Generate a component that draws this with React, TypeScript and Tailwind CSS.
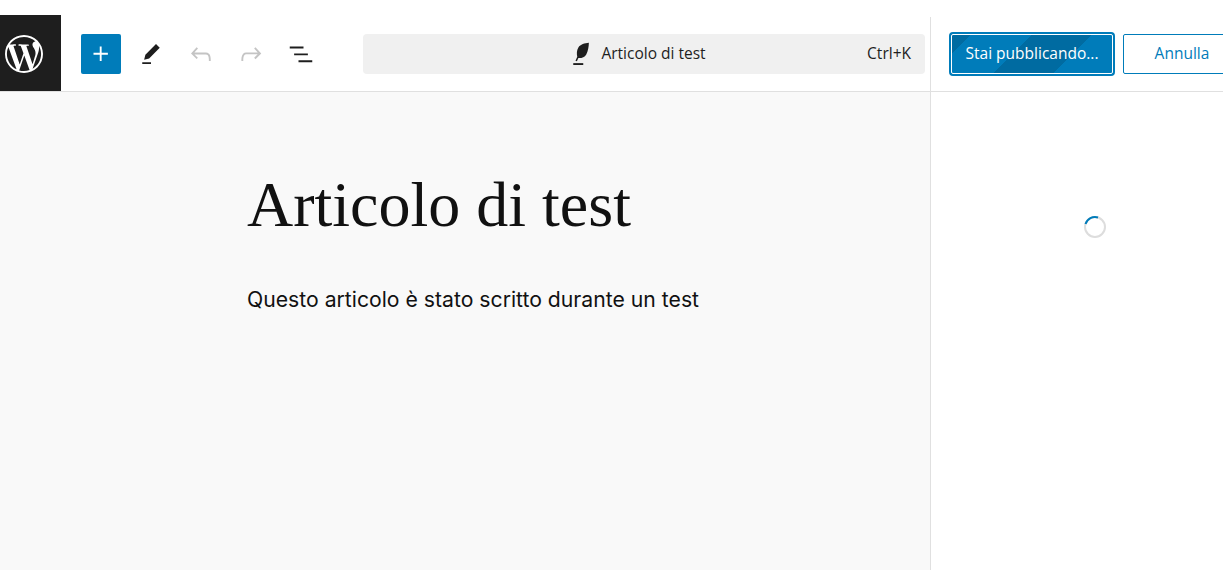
import React from 'react';
import { SiWordpress } from 'react-icons/si';

const uiFont = "font-['Open_Sans',sans-serif]";

const ToolIcon = ({ d, className }: { d: string; className: string }) => (
  <button className="flex h-10 w-10 shrink-0 items-center justify-center">
    <svg viewBox="0 0 24 24" width="30" height="30" className={className} fill="currentColor">
      <path d={d} />
    </svg>
  </button>
);

const App = () => {
  return (
    <div className="flex h-[570px] w-[1223px] flex-col overflow-hidden bg-white">
      <div className="h-[15px] shrink-0 bg-white shadow-[0_2px_4px_rgba(0,0,0,0.22)]" />

      <header className="flex h-[77px] shrink-0 items-center border-b border-[#e0e0e0] bg-white pt-[2px]">
        <div className="-mt-[2px] flex h-[calc(100%+2px)] w-[61px] shrink-0 items-center justify-start bg-[#1e1e1e] pt-[2px] pl-[5px]">
          <SiWordpress className="h-[38px] w-[38px] text-white" />
        </div>

        <div className="ml-5 flex items-center gap-[10px]">
          <button className="flex h-10 w-10 items-center justify-center rounded-[2px] bg-[#007cba]">
            <svg viewBox="0 0 24 24" width="30" height="30" fill="white">
              <path d="M11 12.500V17.500H12.500V12.500H17.500V11H12.500V6H11V11H6V12.500H11Z" />
            </svg>
          </button>
          <ToolIcon className="text-[#1e1e1e]" d="m19 7-3-3-8.500 8.500-1 4 4-1L19 7Zm-7 11.500H5V20h7v-1.500Z" />
          <ToolIcon className="text-[#c4c4c4]" d="M18.300 11.700c-.6-.6-1.400-.9-2.300-.9H6.700l2.900-3.300-1.100-1-4.500 5L8.500 16l1-1-2.700-2.700H16c.5 0 .9.200 1.300.5 1 1 1 3.400 1 4.500v.3h1.500v-.2c0-1.500 0-4.300-1.500-5.700z" />
          <ToolIcon className="text-[#c4c4c4]" d="M15.600 6.500l-1.100 1 2.900 3.300H8c-.9 0-1.700.3-2.300.9-1.400 1.500-1.400 4.200-1.400 5.600v.2h1.500v-.3c0-1.100 0-3.500 1-4.500.3-.3.7-.5 1.300-.5h9.200L14.500 15l1.100 1.100 4.600-4.600-4.600-5z" />
          <ToolIcon className="text-[#1e1e1e]" d="M3 6h11v1.500H3V6zm3.500 5.500h11V13h-11v-1.500zM21 17H10v1.500h11V17z" />
        </div>

        <div className={`relative ml-[42px] flex h-10 w-[562px] shrink-0 items-center justify-center rounded-[4px] bg-[#f0f0f0] pr-[15px] text-[15.5px] text-[#1e1e1e] ${uiFont}`}>
          <svg viewBox="0 0 24 24" width="30" height="30" fill="#1e1e1e" className="mr-[4px]">
            <path d="M17.500 3c-3.300.3-6.800 1.200-8.400 3.700-1.400 2.200-1.400 5-.9 7.500L6.800 17.300l1.100.5 1.200-2.600c2.500.2 5-.6 6.300-2.900 1.500-2.700 2-6.300 2.100-9.300zM9.700 13.800c.8-2.500 2.300-4.500 4.600-6-2.700 1-4.600 3.200-5.500 5.700z" />
            <path d="M5 19.300h8v1.500H5z" />
          </svg>
          <span>Articolo di test</span>
          <span className="absolute right-[14px]">Ctrl+K</span>
        </div>

        <div className="ml-[5px] h-full w-px shrink-0 bg-[#e0e0e0]" />

        <button className={`ml-[18px] flex h-[44px] w-[166px] shrink-0 items-center justify-center rounded-[4px] border-2 border-[#007cba] bg-[repeating-linear-gradient(-45deg,#007cba_0,#007cba_43px,#006ba1_43px,#006ba1_85px)] text-[15.5px] text-white outline-1 -outline-offset-3 outline-white ${uiFont}`}>
          Stai pubblicando...
        </button>
        <button className={`ml-2 flex h-10 w-[118px] shrink-0 items-center justify-center rounded-[2px] border border-[#007cba] text-[15.5px] text-[#007cba] ${uiFont}`}>
          Annulla
        </button>
      </header>

      <div className="flex min-h-0 flex-1">
        <main className="w-[930px] shrink-0 bg-[#f9f9f9] pl-[247px]">
          <h1 className="mt-[73px] font-['Liberation_Serif',serif] text-[64px] leading-[80px] text-[#111111]">Articolo di test</h1>
          <p className="mt-[39px] font-['Inter',sans-serif] text-[21.200px] leading-[30px] text-[#111111]">Questo articolo è stato scritto durante un test</p>
        </main>
        <aside className="flex flex-1 justify-start border-l border-[#e0e0e0] bg-white pt-[123px] pl-[152px]">
          <svg viewBox="0 0 24 24" width="24" height="24" fill="none" strokeWidth="2">
            <circle cx="12" cy="12" r="10" stroke="#dddddd" />
            <path d="M2.500 9 A10 10 0 0 1 15 2.500" stroke="#007cba" />
          </svg>
        </aside>
      </div>
    </div>
  );
};

export default App;
